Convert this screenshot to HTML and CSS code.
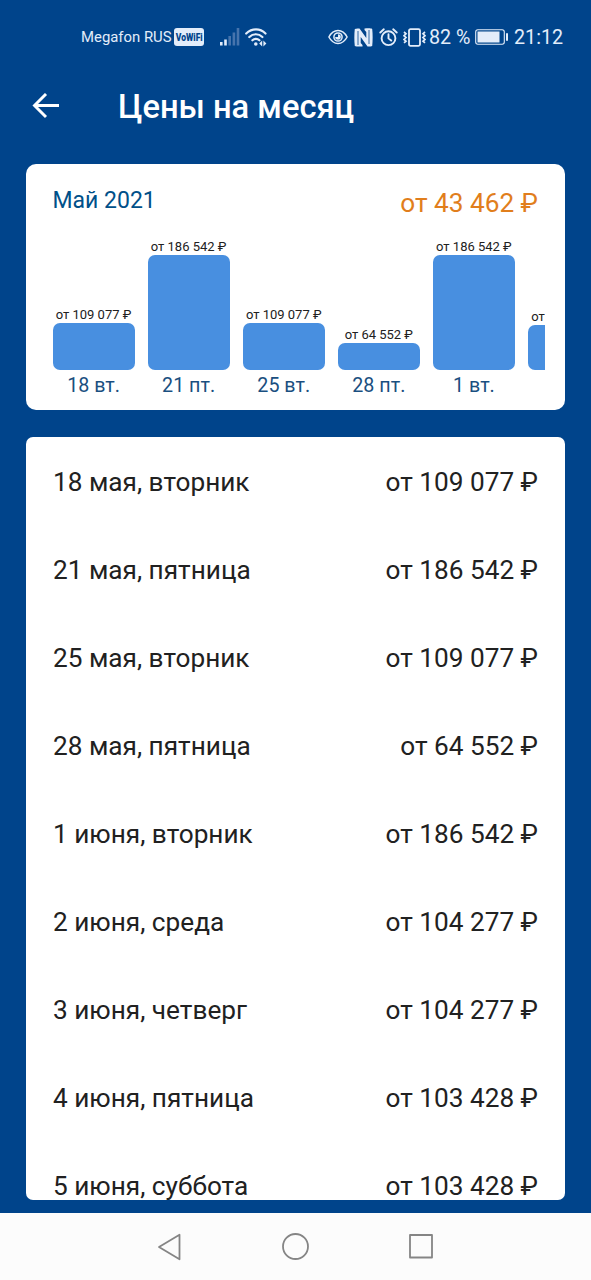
FILE: index.html
```html
<!DOCTYPE html>
<html lang="ru">
<head>
<meta charset="utf-8">
<title>Цены на месяц</title>
<link rel="stylesheet" href="styles.css">
</head>
<body>
<div class="screen">
  <header class="status">
    <div class="status-left">
      <span class="carrier">Megafon RUS</span>
      <span class="vowifi"><span class="vowifi-text">VoWiFi</span></span>
      <svg class="signal" width="20" height="18" viewBox="0 0 20 18"><path d="M0 14h2.600v3.500H0zM4.200 11.500h2.600v6H4.200z" fill="#e3edfa"/><path d="M8.400 8h2.600v9.500H8.400zM12.600 4.500h2.600v13h-2.600zM16.700 0h2.600v17.500h-2.600z" fill="#4674ad"/></svg>
      <svg class="wifi" width="22" height="19" viewBox="0 0 22 19" fill="none" stroke="#e3edfa" stroke-width="2.200" stroke-linecap="round"><path d="M1.200 5.500C7 .1 15 .1 20.500 5.500M4.300 9c3.800-3.700 9.300-3.700 13.100 0M7.400 12.300c2-2 5-2 7 0"/><circle cx="10.800" cy="16" r="1.800" fill="#e3edfa" stroke="none"/><path d="M17.200 12.500v6l-3-3zM18.400 12.500v6l3-3z" fill="#e3edfa" stroke="none"/></svg>
    </div>
    <div class="status-right">
      <svg class="eye" width="20" height="16" viewBox="0 0 20 16" fill="none" stroke="#e3edfa" stroke-width="1.500"><path d="M.9 8C5.500-.6 14.500-.6 19.100 8 14.500 16.600 5.500 16.600.9 8z"/><circle cx="10" cy="8" r="4.100"/><path d="M10 5.200V8H7.200A2.800 2.800 0 1 0 10 5.200z" fill="#e3edfa" stroke="none"/></svg>
      <svg class="nfc" width="19" height="19" viewBox="0 0 19 19"><path d="M.8 1C2 .3 3.500.3 5.500.5L12.300 10V4L10.500 2V.6C14 .2 17 .2 18.200 1c.6 5 .6 12 0 17-1.500.6-3 .6-4.700.5L6.700 9v6l1.800 2v1.400c-3 .3-6 .3-7.700-.4C.2 13 .2 6 .8 1z" fill="#e3edfa"/><path d="M4 3v14M15 2v14" stroke="#00448b" stroke-width=".8"/></svg>
      <svg class="alarm" width="19" height="19" viewBox="0 0 19 19" fill="none" stroke="#e3edfa" stroke-width="1.900" stroke-linecap="round"><circle cx="9.500" cy="10.200" r="6.900"/><path d="M1.300 4.500 4.800 1.300M14.200 1.300l3.500 3.200M9.500 6.300v4.100l2.700 2.200"/></svg>
      <svg class="vibrate" width="23" height="19" viewBox="0 0 23 19" fill="none" stroke="#e3edfa" stroke-width="1.800"><rect x="6" y="1.200" width="11" height="16.600" rx="1.500"/><path d="m1 4 2 1.800L1 7.700l2 1.800-2 1.900 2 1.800-2 1.700M22 4l-2 1.800 2 1.900-2 1.800 2 1.900-2 1.800 2 1.700" stroke-width="1.700"/></svg>
      <span class="percent">82 %</span>
      <svg class="battery" width="34" height="16" viewBox="0 0 34 16"><rect x=".7" y=".7" width="28.600" height="14.600" rx="2.200" fill="none" stroke="#e3edfa" stroke-width="1.100"/><rect x="2.500" y="2.500" width="22" height="11" fill="#e3edfa"/><path d="M31 4.200h2v7.600h-2z" fill="#e3edfa"/></svg>
      <span class="clock">21:12</span>
    </div>
  </header>

  <div class="toolbar">
    <svg class="back" width="28" height="26" viewBox="0 0 28 26" fill="none" stroke="#fff" stroke-width="2.900"><path d="M27 12.500H3M14 1 2.500 12.500 14 24"/></svg>
    <h1 class="title">Цены на месяц</h1>
  </div>

  <section class="card summary">
    <div class="summary-head">
      <span class="month">Май 2021</span>
      <span class="total">от 43 462 ₽</span>
    </div>
    <div class="chart">
      <div class="col"><span class="amount">от 109 077 ₽</span><div class="bar" style="height:47px"></div><span class="day">18 вт.</span></div>
      <div class="col"><span class="amount">от 186 542 ₽</span><div class="bar" style="height:115px"></div><span class="day">21 пт.</span></div>
      <div class="col"><span class="amount">от 109 077 ₽</span><div class="bar" style="height:47px"></div><span class="day">25 вт.</span></div>
      <div class="col"><span class="amount">от 64 552 ₽</span><div class="bar" style="height:27.500px"></div><span class="day">28 пт.</span></div>
      <div class="col"><span class="amount">от 186 542 ₽</span><div class="bar" style="height:115px"></div><span class="day">1 вт.</span></div>
      <div class="col"><span class="amount">от 104 277 ₽</span><div class="bar" style="height:45px"></div><span class="day">2 ср.</span></div>
    </div>
  </section>

  <section class="card list">
    <div class="row"><span>18 мая, вторник</span><span class="price">от 109 077 ₽</span></div>
    <div class="row"><span>21 мая, пятница</span><span class="price">от 186 542 ₽</span></div>
    <div class="row"><span>25 мая, вторник</span><span class="price">от 109 077 ₽</span></div>
    <div class="row"><span>28 мая, пятница</span><span class="price">от 64 552 ₽</span></div>
    <div class="row"><span>1 июня, вторник</span><span class="price">от 186 542 ₽</span></div>
    <div class="row"><span>2 июня, среда</span><span class="price">от 104 277 ₽</span></div>
    <div class="row"><span>3 июня, четверг</span><span class="price">от 104 277 ₽</span></div>
    <div class="row"><span>4 июня, пятница</span><span class="price">от 103 428 ₽</span></div>
    <div class="row"><span>5 июня, суббота</span><span class="price">от 103 428 ₽</span></div>
  </section>

  <nav class="navbar">
    <svg width="26" height="30" viewBox="0 0 26 30"><path d="M23.500 2.700v24.600L3 15z"/></svg>
    <svg width="28" height="30" viewBox="0 0 28 30"><circle cx="13.500" cy="14.500" r="12.500"/></svg>
    <svg width="26" height="30" viewBox="0 0 26 30"><rect x="1" y="3" width="22" height="22.500"/></svg>
  </nav>
</div>
</body>
</html>
```
FILE: styles.css
```css
* { box-sizing: border-box; }
body { margin: 0; font-family: Roboto, "Noto Sans", sans-serif; }
.screen {
  width: 591px; height: 1280px; overflow: hidden;
  display: flex; flex-direction: column;
  background: #00448b; color: #212121;
}
svg { display: block; flex: none; }
.status {
  height: 74px; flex: none; padding: 0 27px 0 81px;
  display: flex; align-items: center; justify-content: space-between;
  color: #e3edfa; white-space: nowrap;
}
.status-left, .status-right { display: flex; align-items: center; }
.carrier { width: 93px; font-size: 14.900px; line-height: 20px; }
.vowifi {
  width: 30px; height: 18px; border-radius: 3px; background: #e3edfa; color: #00448b;
  display: flex; align-items: center; justify-content: center;
}
.vowifi-text { font-size: 11.500px; font-weight: 900; line-height: 18px; transform: scaleX(.74); }
.signal { margin-left: 16px; }
.wifi { margin-left: 5px; }
.nfc { margin-left: 6px; }
.alarm { margin-left: 6px; }
.vibrate { margin-left: 5px; }
.percent { width: 46px; margin-left: 3px; font-size: 19.700px; }
.clock { width: 50px; margin-left: 5px; font-size: 19.700px; }
.toolbar {
  height: 90px; flex: none; padding: 0 0 26px 32px;
  display: flex; align-items: center; gap: 58px;
}
.title { margin: 0; padding-top: 1px; color: #fff; font-size: 32.700px; font-weight: 500; line-height: 40px; }
.card { margin: 0 26px; flex: none; background: #fff; overflow: hidden; }
.summary { height: 246px; border-radius: 10px; padding: 20px 20px 0 26.500px; }
.summary-head { height: 54px; padding-right: 7px; display: flex; justify-content: space-between; }
.month { color: #005089; font-size: 23px; line-height: 34px; }
.total { color: #e17e1c; font-size: 26.200px; line-height: 38px; }
.chart { height: 161px; display: flex; align-items: flex-end; gap: 13px; overflow: hidden; }
.col { width: 82.100px; flex: none; display: flex; flex-direction: column; align-items: center; white-space: nowrap; }
.amount { font-size: 13px; line-height: 17px; }
.bar { width: 100%; border-radius: 7px; background: #488fe0; }
.day { color: #1a4f80; font-size: 19.700px; line-height: 29px; padding-top: 1px; margin-bottom: -1px; }
.list { height: 763.500px; margin-top: 26.500px; border-radius: 7px; padding: 1.500px 27px 0; }
.row {
  height: 88px; display: flex; align-items: center; justify-content: space-between;
  font-size: 26.200px; line-height: 36px; white-space: nowrap;
}
.navbar {
  height: 67px; margin-top: 13px; flex: none; background: #fcfcfc;
  padding: 0 156px; display: flex; align-items: center; justify-content: space-between;
}
.navbar svg { fill: none; stroke: #858585; stroke-width: 1.800; stroke-linejoin: round; }
```
